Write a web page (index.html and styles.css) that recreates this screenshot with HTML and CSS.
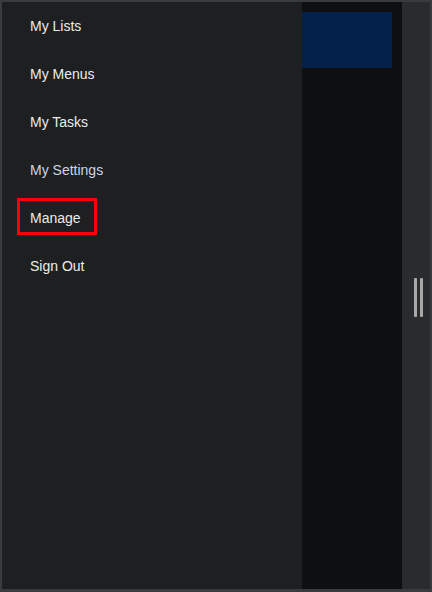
FILE: index.html
```html
<!DOCTYPE html>
<html>
<head>
<meta charset="utf-8">
<link rel="stylesheet" href="styles.css">
</head>
<body>
<div class="frame">
  <nav class="drawer">
    <div class="item"><span class="label">My Lists</span></div>
    <div class="item"><span class="label">My Menus</span></div>
    <div class="item"><span class="label">My Tasks</span></div>
    <div class="item"><span class="label label-active">My Settings</span></div>
    <div class="item"><span class="label label-focus">Manage</span></div>
    <div class="item"><span class="label">Sign Out</span></div>
  </nav>
  <main class="content">
    <div class="banner"></div>
  </main>
  <aside class="rail">
    <div class="handle"><span class="bar"></span><span class="bar"></span></div>
  </aside>
</div>
</body>
</html>
```
FILE: styles.css
```css
html, body {
  margin: 0;
  padding: 0;
  background: #3a3b3d;
}
body {
  font-family: "Liberation Sans", Arial, sans-serif;
}
.frame {
  box-sizing: border-box;
  width: 432px;
  height: 592px;
  border: 2px solid #3a3b3d;
  border-bottom-width: 3px;
  display: flex;
}
.drawer {
  width: 300px;
  background: #1e1f21;
  display: flex;
  flex-direction: column;
}
.item {
  height: 48px;
  display: flex;
  align-items: center;
  padding-left: 28px;
}
.label {
  font-size: 14px;
  color: #ececec;
}
.label-active {
  color: #c9d6ea;
}
.label-focus {
  box-sizing: border-box;
  margin-left: -13px;
  padding: 2px 13px 0 10px;
  height: 37px;
  border: 3px solid #ff0000;
  display: flex;
  align-items: center;
  align-self: flex-start;
  margin-top: 4px;
}
.content {
  width: 100px;
  background: #0e0f11;
  padding-top: 10px;
  box-sizing: border-box;
}
.banner {
  width: 90px;
  height: 56px;
  background: #04214b;
}
.rail {
  flex: 1;
  background: #2a2b2d;
  display: flex;
  align-items: center;
  justify-content: center;
}
.handle {
  display: flex;
  gap: 3px;
  margin-top: 4px;
  margin-left: 4px;
}
.bar {
  width: 3px;
  height: 39px;
  background: #a9a9a9;
  border-radius: 1px;
}
```
